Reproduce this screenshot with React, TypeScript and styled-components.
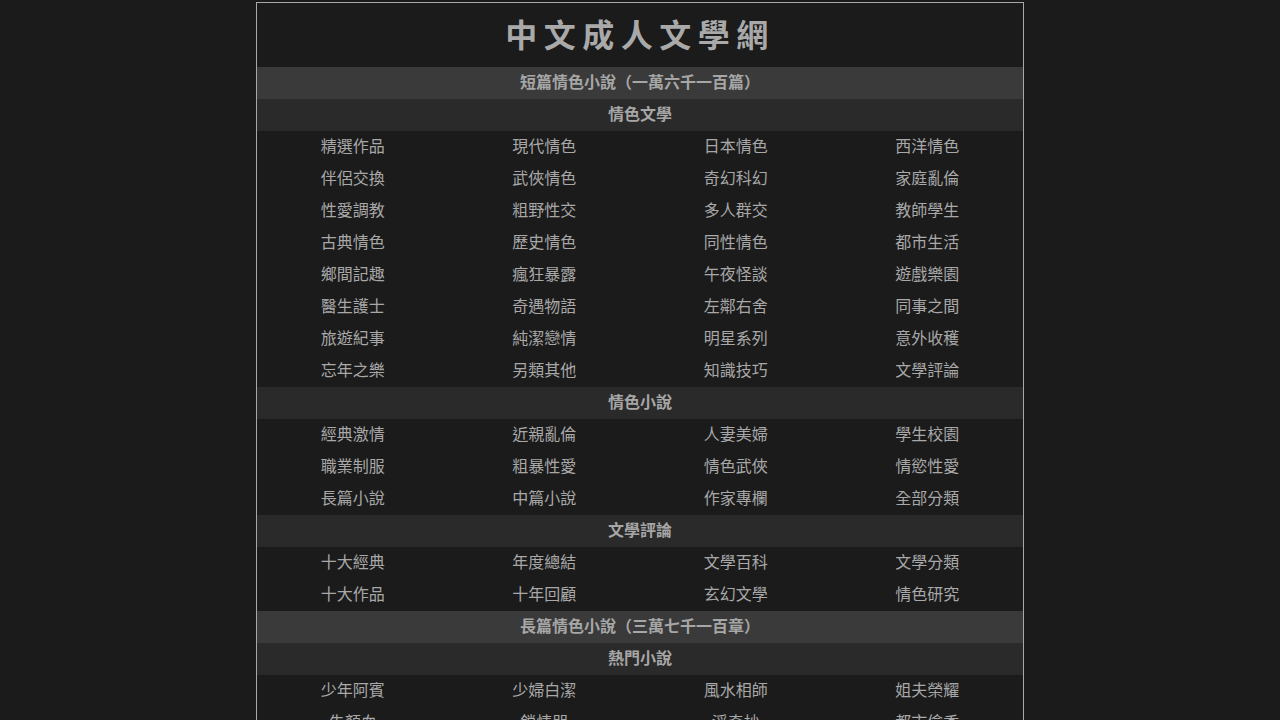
import React from "react";
import styled, { createGlobalStyle } from "styled-components";

const Global = createGlobalStyle`
  html, body { margin: 0; padding: 0; background: #1b1b1b; }
  body { font-family: "Noto Sans CJK TC", "Noto Sans", sans-serif; color: #aaaaaa; }
  * { box-sizing: border-box; }
`;

const Page = styled.div`
  padding-top: 2px;
  display: flex;
  justify-content: center;
`;

const Frame = styled.div`
  width: 768px;
  border: 1px solid #a8a8a8;
  background: #1b1b1b;
`;

const Title = styled.h1`
  margin: 0;
  height: 64px;
  padding: 0 0 4px 0;
  display: flex;
  align-items: center;
  justify-content: center;
  font-size: 32px;
  font-weight: 700;
  letter-spacing: 6.5px;
  color: #a9a9a9;
`;

const Header = styled.div<{ $level: 1 | 2 }>`
  height: 32px;
  padding-bottom: 4px;
  display: flex;
  align-items: center;
  justify-content: center;
  font-size: 16px;
  font-weight: 700;
  color: #a6a6a6;
  background: ${(p) => (p.$level === 1 ? "#3a3a3a" : "#2a2a2a")};
`;

const Grid = styled.div`
  display: grid;
  grid-template-columns: repeat(4, 1fr);
  background: #1b1b1b;
`;

const Item = styled.a`
  height: 32px;
  padding-bottom: 4px;
  display: flex;
  align-items: center;
  justify-content: center;
  font-size: 16px;
  color: #a8a8a8;
  text-decoration: none;
`;

type Block = { title: string; level: 1 | 2; items?: string[] };

const blocks: Block[] = [
  { title: "短篇情色小說（一萬六千一百篇）", level: 1 },
  {
    title: "情色文學",
    level: 2,
    items: [
      "精選作品", "現代情色", "日本情色", "西洋情色",
      "伴侶交換", "武俠情色", "奇幻科幻", "家庭亂倫",
      "性愛調教", "粗野性交", "多人群交", "教師學生",
      "古典情色", "歷史情色", "同性情色", "都市生活",
      "鄉間記趣", "瘋狂暴露", "午夜怪談", "遊戲樂園",
      "醫生護士", "奇遇物語", "左鄰右舍", "同事之間",
      "旅遊紀事", "純潔戀情", "明星系列", "意外收穫",
      "忘年之樂", "另類其他", "知識技巧", "文學評論",
    ],
  },
  {
    title: "情色小說",
    level: 2,
    items: [
      "經典激情", "近親亂倫", "人妻美婦", "學生校園",
      "職業制服", "粗暴性愛", "情色武俠", "情慾性愛",
      "長篇小說", "中篇小說", "作家專欄", "全部分類",
    ],
  },
  {
    title: "文學評論",
    level: 2,
    items: [
      "十大經典", "年度總結", "文學百科", "文學分類",
      "十大作品", "十年回顧", "玄幻文學", "情色研究",
    ],
  },
  { title: "長篇情色小說（三萬七千一百章）", level: 1 },
  {
    title: "熱門小說",
    level: 2,
    items: [
      "少年阿賓", "少婦白潔", "風水相師", "姐夫榮耀",
      "朱顏血", "鎖情咒", "淫奇抄", "都市偷香",
      "江山美色", "我的美女老師", "嬌妻美妾", "官場風月",
    ],
  },
];

export default function App() {
  return (
    <>
      <Global />
      <Page>
        <Frame>
          <Title>中文成人文學網</Title>
          {blocks.map((b) => (
            <React.Fragment key={b.title}>
              <Header $level={b.level}>{b.title}</Header>
              {b.items && (
                <Grid>
                  {b.items.map((it) => (
                    <Item key={it} href="#">{it}</Item>
                  ))}
                </Grid>
              )}
            </React.Fragment>
          ))}
        </Frame>
      </Page>
    </>
  );
}
